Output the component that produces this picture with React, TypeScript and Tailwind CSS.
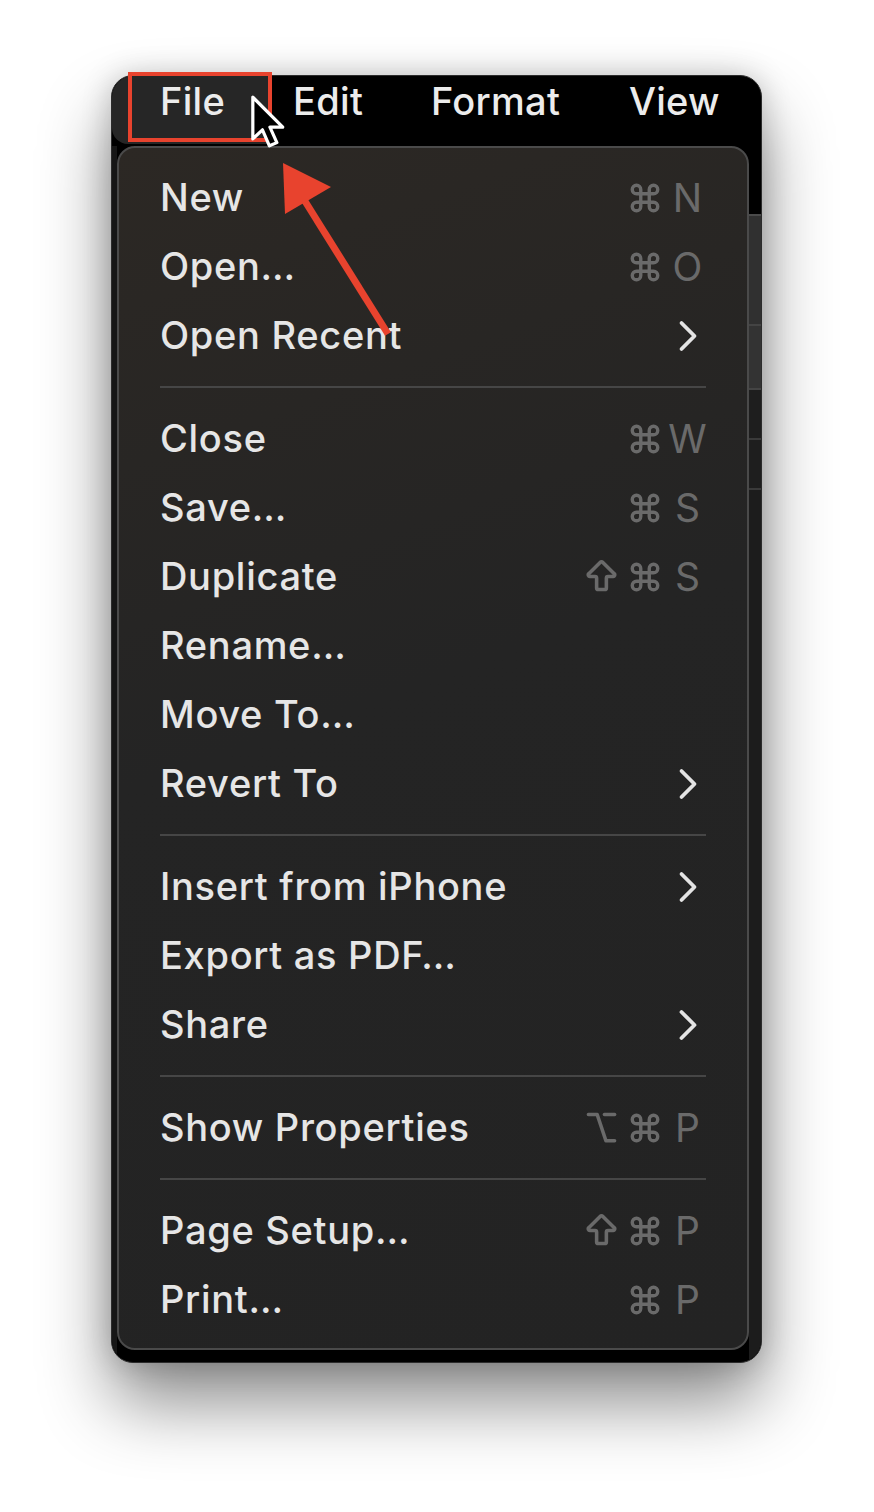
import { ArrowBigUp, Command, Option } from 'lucide-react';

type Item = { label: string; keys?: string[]; sub?: boolean };

// menu sections, separated by a rule
const sections: Item[][] = [
  [
    { label: 'New', keys: ['cmd', 'N'] },
    { label: 'Open…', keys: ['cmd', 'O'] },
    { label: 'Open Recent', sub: true },
  ],
  [
    { label: 'Close', keys: ['cmd', 'W'] },
    { label: 'Save…', keys: ['cmd', 'S'] },
    { label: 'Duplicate', keys: ['shift', 'cmd', 'S'] },
    { label: 'Rename…' },
    { label: 'Move To…' },
    { label: 'Revert To', sub: true },
  ],
  [
    { label: 'Insert from iPhone', sub: true },
    { label: 'Export as PDF…' },
    { label: 'Share', sub: true },
  ],
  [{ label: 'Show Properties', keys: ['opt', 'cmd', 'P'] }],
  [
    { label: 'Page Setup…', keys: ['shift', 'cmd', 'P'] },
    { label: 'Print…', keys: ['cmd', 'P'] },
  ],
];

const font = { fontFamily: 'Inter, "Noto Sans", sans-serif' };

function Key({ k }: { k: string }) {
  let glyph: React.ReactNode = k;
  if (k === 'cmd') glyph = <Command size={34} strokeWidth={2.4} />;
  if (k === 'shift') glyph = <ArrowBigUp size={39} strokeWidth={2.2} />;
  if (k === 'opt') glyph = <Option size={35} strokeWidth={2.4} />;
  return (
    <span className="flex h-[40px] w-[43px] items-center justify-center text-[39px] leading-none text-[#6a6a6a]">
      {glyph}
    </span>
  );
}

function Chevron() {
  return (
    <span className="flex h-[40px] w-[43px] items-center justify-center">
      <svg width="20" height="32" viewBox="0 0 20 32" fill="none">
        <path d="M3.5 3 16.5 16 3.5 29" stroke="#e4e4e4" strokeWidth="3.8" strokeLinecap="round" strokeLinejoin="round" />
      </svg>
    </span>
  );
}

function Row({ item }: { item: Item }) {
  return (
    <div className="flex h-[69px] items-center justify-between pl-[41px] pr-[38px]">
      <span className="text-[38px] font-medium tracking-[0.7px] text-[#e6e6e6]">{item.label}</span>
      <span className="flex items-center">
        {item.keys?.map((k, i) => <Key key={i} k={k} />)}
        {item.sub && <Chevron />}
      </span>
    </div>
  );
}

function Cursor() {
  return (
    <svg className="absolute left-[249px] top-[94px]" width="44" height="62" viewBox="0 0 40 58">
      <path
        d="M3 3 L3 42 L12 33.5 L18.5 48.5 L25.5 45.5 L19 31 L31 31 Z"
        fill="#000"
        stroke="#fff"
        strokeWidth="3"
        strokeLinejoin="round"
      />
    </svg>
  );
}

function Annotation() {
  return (
    <svg className="absolute left-0 top-0" width="874" height="400" viewBox="0 0 874 400">
      <rect x="130" y="74" width="140" height="66" fill="none" stroke="#e8432e" strokeWidth="4" />
      <line x1="388" y1="334" x2="303" y2="198" stroke="#e8432e" strokeWidth="7" />
      <polygon points="283,163 285,214 331,187" fill="#e8432e" />
    </svg>
  );
}

export default function App() {
  return (
    <div className="relative h-[1512px] w-[874px] overflow-hidden bg-white" style={font}>
      <div className="pl-[111px] pt-[75px]">
        <div className="flex h-[1288px] w-[651px] flex-col overflow-hidden rounded-[22px] border border-[#2c2c2c] bg-black shadow-[0_40px_70px_rgba(0,0,0,0.45),0_0_30px_rgba(0,0,0,0.2)]">
          {/* menu bar */}
          <div className="flex h-[70px] shrink-0 items-start text-[38px] font-medium tracking-[0.3px] text-[#ececec]">
            <div className="flex h-[68px] w-[157px] items-center rounded-bl-[16px] bg-[#262626] pb-[18px] pl-[48px]">File</div>
            <div className="flex h-[50px] w-[162px] items-center pl-[24px]">Edit</div>
            <div className="flex h-[50px] w-[198px] items-center">Format</div>
            <div className="flex h-[50px] items-center">View</div>
          </div>

          {/* body: dropdown over the window contents */}
          <div className="flex flex-1">
            <div className="w-[5px] bg-[#161616]" />
            <div className="h-[1204px] w-[632px] rounded-[18px] border-2 border-[#4a4a4a] bg-[#242424] bg-[linear-gradient(160deg,#2c2824_0%,#242424_45%,#232323_100%)] pb-[10px] pt-[15px]">
              {sections.map((sec, si) => (
                <div key={si}>
                  {si > 0 && (
                    <div className="flex h-[34px] items-center pl-[41px] pr-[41px]">
                      <div className="h-[2px] w-full bg-[#464646]" />
                    </div>
                  )}
                  {sec.map((item) => (
                    <Row key={item.label} item={item} />
                  ))}
                </div>
              ))}
            </div>
            <div className="flex w-[12px] flex-col">
              <div className="h-[68px] bg-black" />
              <div className="h-[110px] border-t-2 border-[#4a4a4a] bg-[#303030]" />
              <div className="h-[66px] border-y-2 border-[#444] bg-[#333]" />
              <div className="h-[48px] bg-[#1e1e1e]" />
              <div className="h-[50px] border-t-2 border-[#3a3a3a] bg-[#1e1e1e]" />
              <div className="flex-1 border-t-2 border-[#3a3a3a] bg-[#1c1c1c]" />
            </div>
          </div>
        </div>
      </div>
      <Annotation />
      <Cursor />
    </div>
  );
}
